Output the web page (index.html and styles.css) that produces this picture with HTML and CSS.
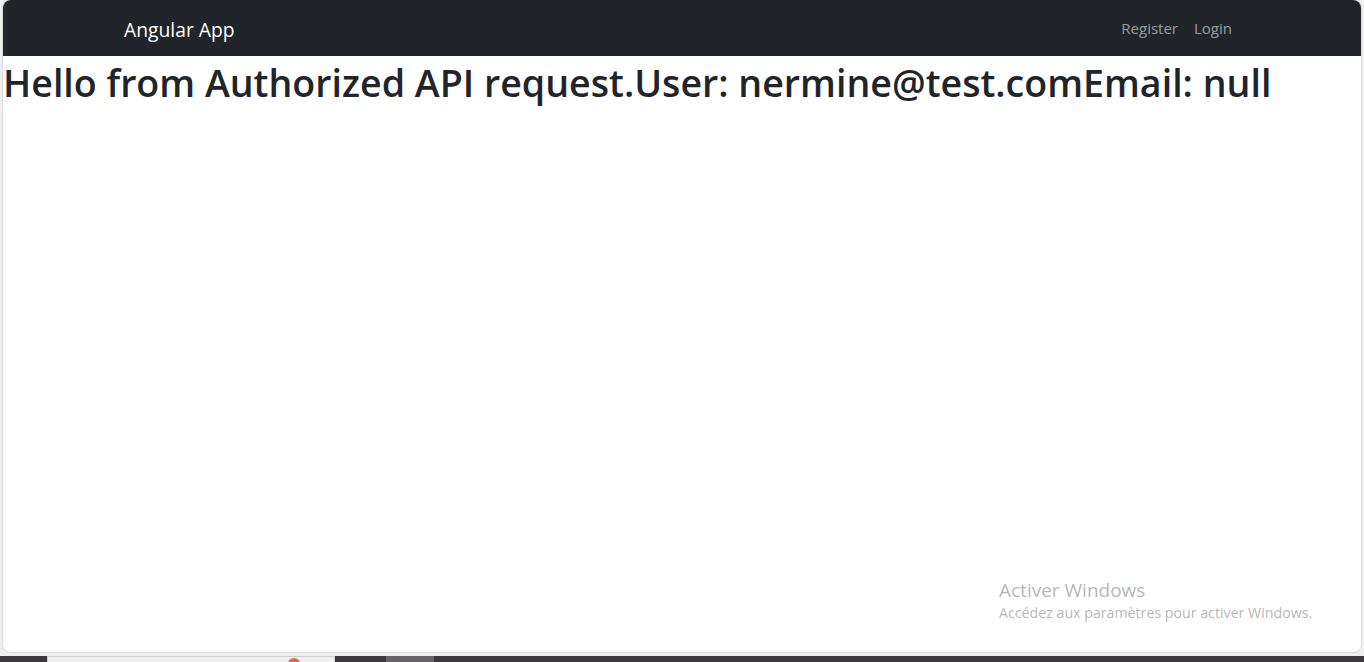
FILE: index.html
```html
<!DOCTYPE html>
<html lang="en">
<head>
<meta charset="utf-8">
<title>Angular App</title>
<link rel="stylesheet" href="styles.css">
</head>
<body>
<div class="window">
  <nav class="navbar">
    <div class="nav-container">
      <a class="brand" href="#">Angular App</a>
      <ul class="nav-links">
        <li><a href="#">Register</a></li>
        <li><a href="#">Login</a></li>
      </ul>
    </div>
  </nav>
  <main class="content">
    <h1 class="greeting">Hello from Authorized API request.User: nermine@test.comEmail: null</h1>
  </main>
  <div class="watermark">
    <div class="wm-title">Activer Windows</div>
    <div class="wm-sub">Accédez aux paramètres pour activer Windows.</div>
  </div>
</div>
<div class="taskbar">
  <div class="tb-dark tb-a"></div>
  <div class="tb-light"><span class="tb-dot"></span></div>
  <div class="tb-dark tb-b"></div>
  <div class="tb-mid"></div>
  <div class="tb-dark tb-rest"></div>
</div>
</body>
</html>
```
FILE: styles.css
```css
html, body {
  margin: 0;
  padding: 0;
}
body {
  background: #efefef;
  font-family: "Open Sans", "Noto Sans", sans-serif;
  width: 1364px;
  height: 662px;
  overflow: hidden;
}
.window {
  position: relative;
  margin: 0 3px;
  height: 652px;
  background: #fff;
  border-radius: 8px;
  box-shadow: 0 0 0 1px #dcdcdc;
  overflow: hidden;
  box-sizing: border-box;
}
.navbar {
  height: 56px;
  background: #212529;
}
.nav-container {
  display: flex;
  align-items: center;
  justify-content: space-between;
  height: 56px;
  padding: 0 121px;
}
.brand {
  color: #fff;
  text-decoration: none;
  font-size: 19.3px;
  padding-top: 2px;
}
.nav-links {
  list-style: none;
  display: flex;
  margin: 0;
  padding: 0;
}
.nav-links a {
  display: block;
  padding: 0 8px;
  color: rgba(255,255,255,0.55);
  text-decoration: none;
  font-size: 15px;
}
.content {
  padding: 0;
}
.greeting {
  margin: 4px 0 0;
  font-size: 37.6px;
  font-weight: 600;
  color: #212529;
  line-height: 1.2;
  white-space: nowrap;
}
.watermark {
  position: absolute;
  left: 996px;
  top: 577px;
  color: rgba(120,120,120,0.55);
}
.wm-title {
  font-size: 19px;
  line-height: 26px;
}
.wm-sub {
  font-size: 14.2px;
  line-height: 20px;
}
.taskbar {
  display: flex;
  height: 6px;
  margin-top: 4px;
}
.tb-dark { background: #3b393c; }
.tb-a { width: 47px; }
.tb-light {
  width: 286px;
  background: #f1f1f1;
  border-top: 1px solid #cfcfcf;
  border-left: 1px solid #cfcfcf;
  border-right: 1px solid #cfcfcf;
  position: relative;
}
.tb-dot {
  position: absolute;
  left: 240px;
  top: 1px;
  width: 12px;
  height: 6px;
  border-radius: 6px 6px 0 0;
  background: #e8653f;
}
.tb-b { width: 51px; }
.tb-mid { width: 48px; background: #666466; }
.tb-rest { flex: 1; }
```
